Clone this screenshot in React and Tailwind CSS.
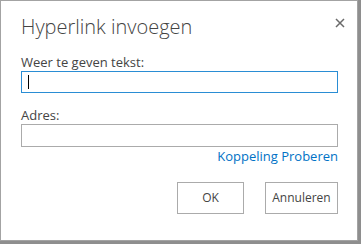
export default function App() {
  return (
    <div className="w-[361px] h-[244px] bg-[#8e8e8e] overflow-hidden" style={{ fontFamily: '"Open Sans", "Noto Sans", sans-serif' }}>
      <div className="w-[358px] h-[241px] bg-white border border-[#a3a3a3] relative">
        <button className="absolute left-[333px] top-[16px] w-[11px] h-[11px] flex items-center justify-center">
          <svg width="10" height="10" viewBox="0 0 10 10">
            <path d="M1 1L9 9M9 1L1 9" stroke="#6a6a6a" strokeWidth="1.5" />
          </svg>
        </button>
        <div className="pl-[20px] pr-[19px] pt-[13px]">
          <h1 className="text-[20px] font-light text-[#444] leading-[26px]">Hyperlink invoegen</h1>
          <label className="block mt-[14px] text-[13px] text-[#444] leading-[16px]">Weer te geven tekst:</label>
          <div className="mt-[1px] h-[22px] border border-[#2a8dd4] flex items-center pl-[6px]">
            <div className="w-px h-[14px] bg-black" />
          </div>
          <label className="block mt-[14px] text-[13px] text-[#444] leading-[16px]">Adres:</label>
          <div className="mt-[1px] h-[23px] border border-[#ababab]" />
          <div className="flex justify-end mt-[1px]">
            <a className="text-[13px] text-[#0072c6] leading-[17px]">Koppeling Proberen</a>
          </div>
          <div className="flex justify-end gap-[21px] mt-[17px]">
            <button className="w-[67px] h-[32px] border border-[#ababab] text-[12px] text-[#444]">OK</button>
            <button className="w-[73px] h-[32px] border border-[#ababab] text-[12px] text-[#444]">Annuleren</button>
          </div>
        </div>
      </div>
    </div>
  );
}
